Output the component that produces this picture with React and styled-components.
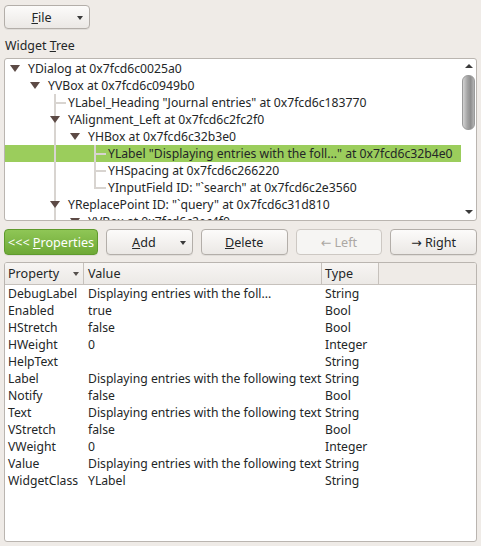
import styled, { createGlobalStyle } from "styled-components";

const GlobalStyle = createGlobalStyle`
  body {
    margin: 0;
    background: #efebe7;
    font-family: "Noto Sans", "DejaVu Sans", sans-serif;
    font-size: 12.2px;
    color: #232627;
  }
`;

const Page = styled.div`
  width: 481px;
  height: 546px;
  box-sizing: border-box;
  padding: 5px 4px 0 4px;
  display: flex;
  flex-direction: column;
`;

const Button = styled.button`
  height: ${(p) => p.h || 26}px;
  box-sizing: border-box;
  display: flex;
  align-items: center;
  justify-content: center;
  padding: 0 5px;
  min-width: 0;
  font: inherit;
  font-size: 12.6px;
  color: ${(p) => (p.disabled ? "#aca8a4" : "#232627")};
  border: 1px solid ${(p) => (p.disabled ? "#cdc8c3" : "#b3aea9")};
  border-radius: 4px;
  background: ${(p) =>
    p.disabled ? "#f6f5f3" : "linear-gradient(#fcfbfa, #ebe8e5)"};
  box-shadow: ${(p) => (p.disabled ? "none" : "0 1px 0 rgba(0,0,0,0.06)")};
  flex: ${(p) => (p.fixed ? `0 0 ${p.fixed}px` : "1 1 0")};
  white-space: nowrap;
`;

const GreenButton = styled(Button)`
  color: #ffffff;
  border-color: #5f9a2d;
  background: linear-gradient(#8fc656, #6ea936);
`;

const ButtonLabel = styled.span`
  flex: 1;
  text-align: center;
`;

const DropArrow = styled.span`
  width: 0;
  height: 0;
  border-left: 3.5px solid transparent;
  border-right: 3.5px solid transparent;
  border-top: 4px solid #3a3a3a;
  margin: 1px 1px 0 4px;
`;

const FileButton = styled(Button)`
  width: 86px;
  flex: none;
`;

const SectionLabel = styled.div`
  height: 17px;
  line-height: 17px;
  font-size: 12.4px;
  margin: 8px 0 4px 1px;
`;

const TreeBox = styled.div`
  height: 163px;
  box-sizing: border-box;
  border: 1px solid #bab5b0;
  border-radius: 3px;
  background: #ffffff;
  display: flex;
  overflow: hidden;
`;

const TreeList = styled.div`
  flex: 1;
  padding-top: 1px;
  overflow: hidden;
`;

const TreeRow = styled.div`
  height: 17px;
  display: flex;
  align-items: stretch;
  padding-left: 3px;
  background: ${(p) => (p.selected ? "#9bcd5c" : "transparent")};
  white-space: nowrap;
`;

const lineColor = "#d8d4d0";
const vLine = (h) => `linear-gradient(${lineColor}, ${lineColor}) no-repeat 6px 0 / 2px ${h}`;
const hLine = `linear-gradient(${lineColor}, ${lineColor}) no-repeat 8px 8px / 10px 2px`;

const cellBg = {
  blank: "none",
  line: vLine("100%"),
  tee: `${hLine}, ${vLine("100%")}`,
  corner: `${hLine}, ${vLine("10px")}`,
  open: "none",
  openLine: vLine("100%"),
};

const Cell = styled.span`
  flex: 0 0 20px;
  display: flex;
  align-items: center;
  padding-left: 2px;
  box-sizing: border-box;
  background: ${(p) => cellBg[p.kind]};
`;

const Expander = styled.span`
  width: 0;
  height: 0;
  border-left: 5.5px solid transparent;
  border-right: 5.5px solid transparent;
  border-top: 7px solid #5c4a45;
`;

const NodeText = styled.span`
  line-height: 17px;
`;

const ScrollBar = styled.div`
  flex: 0 0 15px;
  display: flex;
  flex-direction: column;
  align-items: center;
  padding: 5px 0 6px;
  box-sizing: border-box;
`;

const ScrollArrow = styled.span`
  width: 0;
  height: 0;
  border-left: 4px solid transparent;
  border-right: 4px solid transparent;
  ${(p) =>
    p.down ? "border-top: 4px solid #3a3a3a;" : "border-bottom: 4px solid #3a3a3a;"}
  margin-top: ${(p) => (p.down ? "auto" : "0")};
`;

const Thumb = styled.span`
  width: 13px;
  height: 55px;
  margin-top: 7px;
  border-radius: 6px;
  box-sizing: border-box;
  border: 1px solid #9a9a9a;
  background: linear-gradient(90deg, #d2d2d2, #a4a4a4 40%, #8e8e8e 70%, #b4b4b4);
`;

const ButtonRow = styled.div`
  display: flex;
  gap: 8px;
  margin-top: 8px;
`;

const TableBox = styled.div`
  margin-top: 7px;
  height: 280px;
  box-sizing: border-box;
  border: 1px solid #bab5b0;
  border-radius: 3px;
  background: #ffffff;
  overflow: hidden;
`;

const Header = styled.div`
  display: flex;
  height: 22px;
  box-sizing: border-box;
  border-bottom: 1px solid #c6c1bc;
  background: #efebe7;
  font-size: 12.6px;
`;

const HeaderCell = styled.div`
  flex: 0 0 ${(p) => p.w}px;
  box-sizing: border-box;
  display: flex;
  align-items: center;
  padding-left: ${(p) => p.pad || 3}px;
  border-right: 1px solid #c6c1bc;
  background: linear-gradient(#f7f5f3, #ece9e6);
`;

const SortArrow = styled.span`
  width: 0;
  height: 0;
  border-left: 3.5px solid transparent;
  border-right: 3.5px solid transparent;
  border-top: 4px solid #55504c;
  margin-left: auto;
  margin-right: 4px;
`;

const Grid = styled.div`
  display: grid;
  grid-template-columns: 79px 238px 1fr;
`;

const TCell = styled.div`
  height: 17px;
  line-height: 17px;
  padding-left: ${(p) => p.pad}px;
  white-space: nowrap;
`;

const tree = [
  { cells: ["open"], text: "YDialog at 0x7fcd6c0025a0" },
  { cells: ["blank", "open"], text: "YVBox at 0x7fcd6c0949b0" },
  { cells: ["blank", "blank", "tee"], text: 'YLabel_Heading "Journal entries" at 0x7fcd6c183770' },
  { cells: ["blank", "blank", "openLine"], text: "YAlignment_Left at 0x7fcd6c2fc2f0" },
  { cells: ["blank", "blank", "line", "open"], text: "YHBox at 0x7fcd6c32b3e0" },
  {
    cells: ["blank", "blank", "line", "blank", "tee"],
    text: 'YLabel "Displaying entries with the foll..." at 0x7fcd6c32b4e0',
    selected: true,
  },
  { cells: ["blank", "blank", "line", "blank", "tee"], text: "YHSpacing at 0x7fcd6c266220" },
  { cells: ["blank", "blank", "line", "blank", "corner"], text: 'YInputField ID: "`search" at 0x7fcd6c2e3560' },
  { cells: ["blank", "blank", "openLine"], text: 'YReplacePoint ID: "`query" at 0x7fcd6c31d810' },
  { cells: ["blank", "blank", "line", "open"], text: "YVBox at 0x7fcd6c2ec4f0" },
];

const longText = "Displaying entries with the following text";

const props = [
  ["DebugLabel", "Displaying entries with the foll...", "String"],
  ["Enabled", "true", "Bool"],
  ["HStretch", "false", "Bool"],
  ["HWeight", "0", "Integer"],
  ["HelpText", "", "String"],
  ["Label", longText, "String"],
  ["Notify", "false", "Bool"],
  ["Text", longText, "String"],
  ["VStretch", "false", "Bool"],
  ["VWeight", "0", "Integer"],
  ["Value", longText, "String"],
  ["WidgetClass", "YLabel", "String"],
];

function App() {
  return (
    <Page>
      <GlobalStyle />
      <FileButton h={24}>
        <ButtonLabel>
          <u>F</u>ile
        </ButtonLabel>
        <DropArrow />
      </FileButton>

      <SectionLabel>
        Widget <u>T</u>ree
      </SectionLabel>
      <TreeBox>
        <TreeList>
          {tree.map((row, i) => (
            <TreeRow key={i} selected={row.selected}>
              {row.cells.map((kind, j) => (
                <Cell key={j} kind={kind}>
                  {(kind === "open" || kind === "openLine") && <Expander />}
                </Cell>
              ))}
              <NodeText>{row.text}</NodeText>
            </TreeRow>
          ))}
        </TreeList>
        <ScrollBar>
          <ScrollArrow />
          <Thumb />
          <ScrollArrow down />
        </ScrollBar>
      </TreeBox>

      <ButtonRow>
        <GreenButton fixed={94}>
          &lt;&lt;&lt;&nbsp;<u>P</u>roperties
        </GreenButton>
        <Button>
          <ButtonLabel>
            <u>A</u>dd
          </ButtonLabel>
          <DropArrow />
        </Button>
        <Button>
          <u>D</u>elete
        </Button>
        <Button disabled>← Left</Button>
        <Button>→ Right</Button>
      </ButtonRow>

      <TableBox>
        <Header>
          <HeaderCell w={79}>
            Property
            <SortArrow />
          </HeaderCell>
          <HeaderCell w={238} pad={4}>
            Value
          </HeaderCell>
          <HeaderCell w={57}>Type</HeaderCell>
        </Header>
        <Grid>
          {props.map(([name, value, type]) => (
            <>
              <TCell key={name + "n"} pad={3}>
                {name}
              </TCell>
              <TCell key={name + "v"} pad={4}>
                {value}
              </TCell>
              <TCell key={name + "t"} pad={3}>
                {type}
              </TCell>
            </>
          ))}
        </Grid>
      </TableBox>
    </Page>
  );
}

export default App;
